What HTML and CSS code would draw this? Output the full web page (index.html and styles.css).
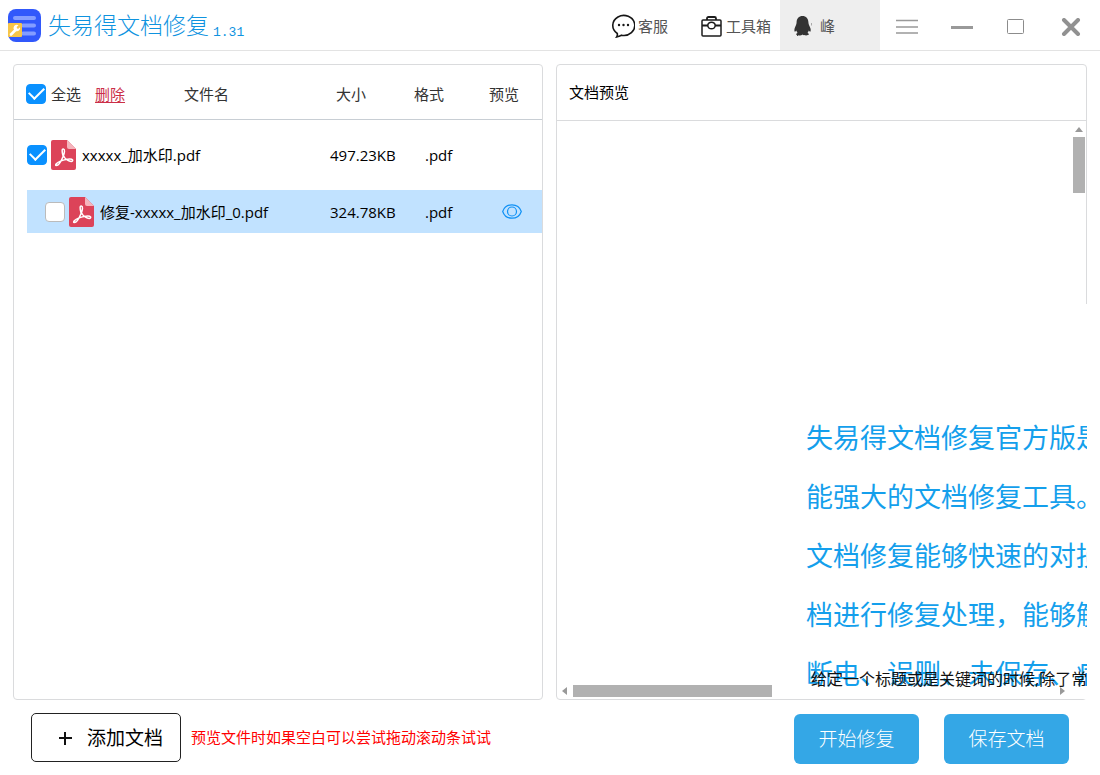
FILE: index.html
```html
<!DOCTYPE html>
<html lang="zh-CN">
<head>
<meta charset="utf-8">
<title>失易得文档修复</title>
<link rel="stylesheet" href="styles.css">
</head>
<body>
<header class="titlebar">
  <div class="brand">
    <svg class="logo" width="33" height="33" viewBox="0 0 33 33">
      <rect width="33" height="33" rx="8" fill="#3158fb"/>
      <g stroke="#849dff" stroke-width="4" stroke-linecap="round"><path d="M7 9H26M15 16.500H26M15 24.500H26"/></g>
      <rect y="14" width="14" height="14" rx="1" fill="#f7c548"/>
      <path d="M3 25.500L7.500 21" stroke="#fff" stroke-width="2.600" stroke-linecap="round"/>
      <path d="M10.500 16.200L8.700 18L9 19.600L10.500 19.700L12 18.200A3.300 3.300 0 1 1 10.500 16.200Z" fill="#fff"/>
    </svg>
    <h1 class="brand-name">失易得文档修复</h1>
    <span class="version">1.31</span>
  </div>
  <nav class="tools">
    <button class="tool tool-service" type="button">
      <svg width="24" height="24" viewBox="0 0 24 24" fill="none" stroke="#161616" stroke-width="1.600">
        <path d="M6.300 19.500A11 10 0 1 1 10.500 21.200C9 22.200 7.300 22.500 5.700 22.900C6.400 21.800 6.500 20.800 6.300 19.500Z"/>
        <g fill="#161616" stroke="none"><circle cx="8" cy="11" r="1.200"/><circle cx="12.500" cy="11" r="1.200"/><circle cx="17" cy="11" r="1.200"/></g>
      </svg>
      客服
    </button>
    <button class="tool tool-box" type="button">
      <svg width="21" height="21" viewBox="0 0 21 21" fill="none" stroke="#1c1c1c" stroke-width="1.500">
        <rect x="1" y="4" width="19" height="16" rx="1"/>
        <path d="M6 4V2.500Q6 1 7.500 1H13.500Q15 1 15 2.500V4" stroke-width="1.800"/>
        <path d="M1 9.500H7M14 9.500H20" stroke-width="2"/>
        <ellipse cx="10.500" cy="9.500" rx="3.700" ry="3.300"/>
      </svg>
      工具箱
    </button>
    <button class="tool tool-user" type="button">
      <svg width="18" height="20" viewBox="0 0 18 20" fill="#333">
        <path d="M8.500 0C4.900 0 2.600 2.700 2.600 6.200C2.600 8.500 1.200 10.300 .6 12.500C.1 14.400 .5 15.700 1 15.700C1.500 15.700 1.900 15.200 2.300 14.600C2.600 15.600 3 16.300 3.600 16.900C2.500 17.300 2 17.900 2.200 18.600C2.500 19.700 7.300 19.800 8.600 18.500C9.900 19.800 14.600 19.600 14.900 18.600C15.100 17.900 14.500 17.300 13.500 16.900C14.100 16.300 14.500 15.600 14.800 14.600C15.200 15.200 15.600 15.700 16.100 15.700C16.600 15.700 17 14.400 16.500 12.500C15.900 10.300 14.400 8.500 14.400 6.200C14.400 2.700 12 0 8.500 0Z"/>
        <path d="M17.500 7V9.500" stroke="#aaa"/>
      </svg>
      峰
    </button>
  </nav>
  <div class="window-controls">
    <button type="button" class="win" aria-label="菜单"><svg width="22" height="16" viewBox="0 0 22 16"><path d="M0 1.500H22M0 8H22M0 14H22" stroke="#999" stroke-width="1.500"/></svg></button>
    <button type="button" class="win" aria-label="最小化"><svg width="22" height="16" viewBox="0 0 22 16"><path d="M0 8.500H22" stroke="#999" stroke-width="3"/></svg></button>
    <button type="button" class="win" aria-label="最大化"><svg width="18" height="16" viewBox="0 0 18 16"><rect x=".5" y=".5" width="16" height="14" rx="1" fill="none" stroke="#8c8c8c"/></svg></button>
    <button type="button" class="win" aria-label="关闭"><svg width="20" height="18" viewBox="0 0 20 18"><path d="M3 2L17 16M17 2L3 16" stroke="#919191" stroke-width="4" stroke-linecap="round"/></svg></button>
  </div>
</header>

<main class="panels">
  <section class="panel files">
    <table class="file-table">
      <colgroup><col><col class="col-size"><col class="col-format"><col class="col-preview"></colgroup>
      <thead>
        <tr>
          <th>
            <div class="head-name">
              <label class="select-all"><input class="check" type="checkbox" checked>全选</label>
              <a class="delete" href="#">删除</a>
              <span>文件名</span>
            </div>
          </th>
          <th class="size">大小</th>
          <th class="format">格式</th>
          <th class="preview">预览</th>
        </tr>
      </thead>
      <tbody>
        <tr class="row">
          <td>
            <label class="file">
              <input class="check" type="checkbox" checked>
              <svg width="25" height="30" viewBox="0 0 25 30">
                <path d="M2 0H16L25 9V28Q25 30 23 30H2Q0 30 0 28V2Q0 0 2 0Z" fill="#dc4359"/><path d="M16 0L25 9H18Q16 9 16 7Z" fill="#f5b4bc"/>
                <g fill="none" stroke="#fff" stroke-width="1.500"><path d="M12.300 17C10.500 11 11 8.700 12.400 9C14.200 9.300 13.500 12.800 12.300 16C10.500 20.500 7.500 25.500 5.300 25.600C3.500 25.500 5.500 22.500 10 20.900C14 19.500 20.500 18.200 21.600 20C22.200 21.800 19.200 22 16.500 20.200C14.600 19 13 17.500 12.300 15.500"/></g>
              </svg>
              <span>xxxxx_加水印.pdf</span>
            </label>
          </td>
          <td class="size">497.23KB</td>
          <td class="format">.pdf</td>
          <td class="preview"></td>
        </tr>
        <tr class="row row-selected">
          <td>
            <label class="file file-child">
              <input class="check" type="checkbox">
              <svg width="25" height="30" viewBox="0 0 25 30">
                <path d="M2 0H16L25 9V28Q25 30 23 30H2Q0 30 0 28V2Q0 0 2 0Z" fill="#dc4359"/><path d="M16 0L25 9H18Q16 9 16 7Z" fill="#f5b4bc"/>
                <g fill="none" stroke="#fff" stroke-width="1.500"><path d="M12.300 17C10.500 11 11 8.700 12.400 9C14.200 9.300 13.500 12.800 12.300 16C10.500 20.500 7.500 25.500 5.300 25.600C3.500 25.500 5.500 22.500 10 20.900C14 19.500 20.500 18.200 21.600 20C22.200 21.800 19.200 22 16.500 20.200C14.600 19 13 17.500 12.300 15.500"/></g>
              </svg>
              <span>修复-xxxxx_加水印_0.pdf</span>
            </label>
          </td>
          <td class="size">324.78KB</td>
          <td class="format">.pdf</td>
          <td class="preview">
            <button class="eye" type="button" aria-label="预览">
              <svg width="20" height="15" viewBox="0 0 20 15" fill="none" stroke="#1091f5" stroke-width="1.200"><path d="M.7 7.500C2.200 3 6 .8 10 .8S17.800 3 19.300 7.500C17.800 12 14 14.200 10 14.200S2.200 12 .7 7.500Z"/><circle cx="10" cy="7.500" r="4.500"/></svg>
            </button>
          </td>
        </tr>
      </tbody>
    </table>
  </section>

  <section class="panel viewer">
    <h2 class="viewer-title">文档预览</h2>
    <div class="viewer-body">
      <div class="sheet">
        <div class="sheet-text">
          <p>失易得文档修复官方版是</p>
          <p>能强大的文档修复工具。</p>
          <p>文档修复能够快速的对损</p>
          <p>档进行修复处理，能够解</p>
          <p>断电、误删、未保存、病</p>
        </div>
        <p class="sheet-note">给定一个标题或是关键词的时候,除了常</p>
      </div>
      <div class="scroll-y">
        <svg width="8" height="5" viewBox="0 0 8 5"><path d="M0 5L4 0L8 5Z" fill="#999"/></svg>
        <div class="thumb-y"></div>
      </div>
      <div class="scroll-x">
        <svg width="5" height="8" viewBox="0 0 5 8"><path d="M5 0L0 4L5 8Z" fill="#999"/></svg>
        <div class="track-x"><div class="thumb-x"></div></div>
        <svg width="5" height="8" viewBox="0 0 5 8"><path d="M0 0L5 4L0 8Z" fill="#999"/></svg>
      </div>
    </div>
  </section>
</main>

<footer class="actions">
  <button class="add" type="button">
    <svg width="14" height="14" viewBox="0 0 14 14"><path d="M1 7H14M7 1V14" stroke="#111" stroke-width="2"/></svg>
    添加文档
  </button>
  <p class="hint">预览文件时如果空白可以尝试拖动滚动条试试</p>
  <div class="primary-actions">
    <button class="primary" type="button">开始修复</button>
    <button class="primary" type="button">保存文档</button>
  </div>
</footer>
</body>
</html>
```

FILE: styles.css
```css
* {
  box-sizing: border-box;
}

body {
  margin: 0;
  min-height: 100vh;
  display: flex;
  flex-direction: column;
  background: #fff;
  color: #000;
  font: 15px/20px "Open Sans", "Noto Sans CJK SC", sans-serif;
}

h1, h2, p {
  margin: 0;
  font-weight: 400;
}

button {
  padding: 0;
  border: 0;
  background: none;
  color: inherit;
  font: inherit;
  cursor: pointer;
}

svg {
  display: block;
  flex: none;
}

.titlebar {
  display: flex;
  height: 51px;
  border-bottom: 1px solid #e3e3e3;
}

.brand {
  display: flex;
  align-items: center;
  flex: 1;
  padding-left: 8px;
  color: #0f93df;
}

.brand-name {
  margin-left: 7px;
  font-size: 23px;
  font-weight: 300;
  line-height: 32px;
}

.version {
  margin-left: 4px;
  padding-top: 16px;
  font: 13px/16px "Liberation Mono", monospace;
}

.tools {
  display: flex;
  color: #555;
}

.tool {
  display: flex;
  align-items: center;
  padding-top: 2px;
}

.tool-service {
  gap: 3px;
  margin-right: 33px;
}

.tool-box {
  gap: 4px;
  margin-right: 9px;
}

.tool-user {
  gap: 8px;
  width: 100px;
  padding-left: 14px;
  background: #eee;
}

.window-controls {
  display: flex;
  align-items: center;
  width: 220px;
  padding: 4px 2px 0 0;
}

.win {
  display: flex;
  flex: 1;
  justify-content: center;
}

.panels {
  display: flex;
  flex: 1;
  gap: 13px;
  padding: 13px 13px 0;
}

.panel {
  min-width: 0;
  border: 1px solid #dadbdd;
  border-radius: 4px;
}

.files { flex: 530 1 0; }

.file-table {
  width: 100%;
  table-layout: fixed;
  border-spacing: 0;
}

.col-size { width: 90px; }
.col-format { width: 70px; }
.col-preview { width: 66px; }

th {
  height: 55px;
  padding: 4px 0 0;
  border-bottom: 1px solid #c8ced4;
  color: #333;
  font-weight: 400;
  text-align: left;
}

td {
  height: 43px;
  padding: 0;
}

.row:first-child td { height: 70px; }

td:first-child {
  border-left: 13px solid #fff;
}

th.size { padding-left: 20px; }
th.format { padding-left: 8px; }
th.preview { padding-left: 13px; }
td.size { padding-left: 14px; }
td.format { padding-left: 19px; }
td.preview { padding-left: 26px; }

.row-selected td {
  background: #c1e2ff;
  background-clip: padding-box;
}

.head-name {
  display: flex;
  align-items: center;
  padding-left: 12px;
}

.select-all {
  display: flex;
  align-items: center;
  gap: 5px;
}

.delete {
  margin: 0 59px 0 14px;
  color: #cb2f48;
  text-underline-offset: 2px;
}

.check {
  appearance: none;
  display: grid;
  place-items: center;
  flex: none;
  width: 20px;
  height: 20px;
  margin: 0;
  border: 1px solid #bbb;
  border-radius: 4px;
  background: #fff;
}

.check:checked {
  border-color: #0a91ff;
  background: #0a91ff;
}

.check:checked::after {
  content: "";
  width: 13px;
  height: 7px;
  margin-bottom: 5px;
  border: solid #fff;
  border-width: 0 0 2px 2px;
  transform: rotate(-45deg);
}

.file {
  display: flex;
  align-items: center;
  white-space: nowrap;
}

.file svg { margin: 0 6px 0 4px; }
.file-child { padding-left: 18px; }

.eye {
  display: block;
}

.viewer {
  flex: 531 1 0;
  display: flex;
  flex-direction: column;
}

.viewer-title {
  padding: 17px 12px 18px;
  border-bottom: 1px solid #dadbdd;
  font-size: 15px;
  line-height: 20px;
}

.viewer-body {
  position: relative;
  flex: 1;
}

/* The rendered page floats over the viewer and its right border. */
.sheet {
  position: absolute;
  inset: 183px -1px 0 auto;
  width: 281px;
  overflow: hidden;
  background: #fff;
  white-space: nowrap;
}

.sheet-text {
  position: absolute;
  inset: 0 0 12px;
  overflow: hidden;
  padding-top: 103px;
  color: #149fec;
  font: 27px/59px "Noto Sans CJK SC", sans-serif;
}

.sheet-note {
  position: absolute;
  left: 5px;
  bottom: 10px;
  color: #111;
  font-size: 16px;
}

.scroll-y {
  position: absolute;
  top: 6px;
  right: 1px;
  display: flex;
  flex-direction: column;
  align-items: center;
  gap: 5px;
}

.thumb-y {
  width: 12px;
  height: 56px;
  background: #b1b1b1;
}

.scroll-x {
  position: absolute;
  inset: auto 21px 2px 5px;
  display: flex;
  align-items: center;
  gap: 6px;
}

.track-x {
  flex: 1;
}

.thumb-x {
  width: 199px;
  height: 12px;
  background: #b1b1b1;
}

.actions {
  display: flex;
  align-items: flex-start;
  padding: 13px 31px 11px;
}

.add {
  display: flex;
  align-items: center;
  justify-content: center;
  gap: 15px;
  width: 150px;
  height: 49px;
  padding-left: 9px;
  border: 1px solid #222;
  border-radius: 5px;
  font-size: 19px;
}

.hint {
  margin-left: 10px;
  color: #f00;
  line-height: 48px;
}

.primary-actions {
  display: flex;
  gap: 25px;
  margin-left: auto;
  padding-top: 1px;
}

.primary {
  width: 125px;
  height: 50px;
  border-radius: 6px;
  background: #34a7e6;
  color: #fff;
  font-size: 19px;
  font-weight: 300;
}
```
